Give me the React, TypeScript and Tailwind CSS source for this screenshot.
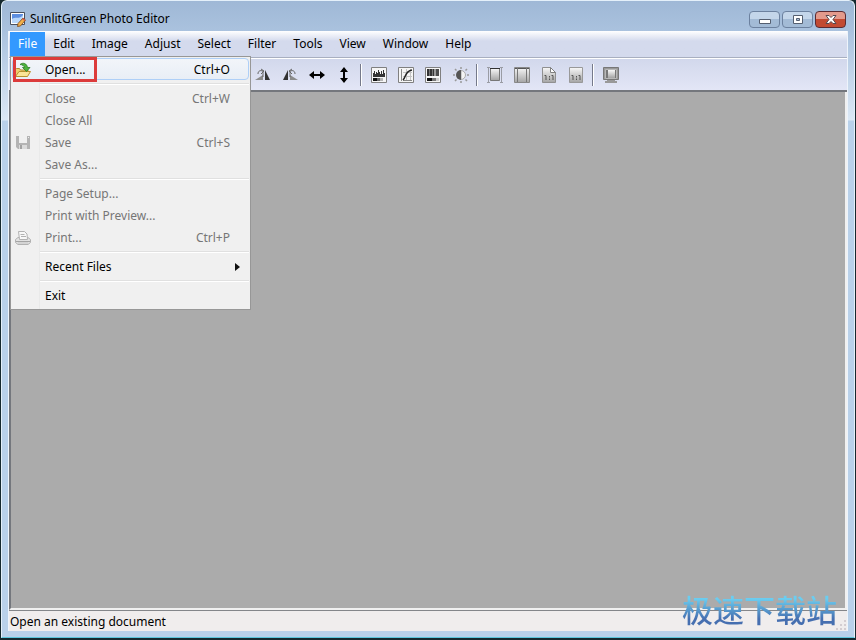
import type { ReactNode } from 'react'

type MenuEntry = { label: string; keys?: string; off?: boolean; icon?: ReactNode; sub?: boolean; active?: boolean }

const MENUS = ['Edit', 'Image', 'Adjust', 'Select', 'Filter', 'Tools', 'View', 'Window', 'Help']

const OpenIcon = () => (
  <svg width="16" height="16" viewBox="0 0 16 16">
    <path d="M.5 14V7.500l1-1h3l1 1.500H13V10" fill="#efd070" stroke="#b08a2c" />
    <path d="M.5 14.500 4 9.500h11.500l-3 5z" fill="#fae596" stroke="#b8922f" />
    <path d="M5 2.500c3-2.500 7-1 7.500 3H15l-3.500 4-4-4h2C9 4 7.500 2.500 5 2.500z" fill="#4db33c" stroke="#2c7a24" strokeWidth=".8" />
  </svg>
)

const SaveIcon = () => (
  <svg width="16" height="16" viewBox="0 0 16 16">
    <path d="M1 1h14v13H3l-2-2z" fill="#b4b4b4" />
    <path d="M4 1h8v7H4z" fill="#f0f0f0" />
    <path d="M4 10h8v4H4z" fill="#dadada" />
    <path d="M5 10h2v4H5z" fill="#a2a2a2" />
    <path d="M13 2h1v1h-1z" fill="#eee" />
  </svg>
)

const PrintIcon = () => (
  <svg width="16" height="16" viewBox="0 0 16 16" stroke="#b2b2b2" fill="#e2e2e2">
    <path d="M.5 9.500 3 7.500h10l2.500 2v3l-2.500 2H3l-2.500-2z" />
    <path d="M4.500 9.500l-1-8h6l2.500 2.500.5 5.500z" fill="#f8f8f8" />
    <path d="M5.500 4.500h4M6 6.500h5" fill="none" />
    <path d="M1 11.500h14" fill="none" stroke="#a4a4a4" />
    <path d="M3 13h10" fill="none" stroke="#c6c6c6" />
  </svg>
)

const GROUPS: MenuEntry[][] = [
  [{ label: 'Open...', keys: 'Ctrl+O', icon: <OpenIcon />, active: true }],
  [
    { label: 'Close', keys: 'Ctrl+W', off: true },
    { label: 'Close All', off: true },
    { label: 'Save', keys: 'Ctrl+S', off: true, icon: <SaveIcon /> },
    { label: 'Save As...', off: true },
  ],
  [
    { label: 'Page Setup...', off: true },
    { label: 'Print with Preview...', off: true },
    { label: 'Print...', keys: 'Ctrl+P', off: true, icon: <PrintIcon /> },
  ],
  [{ label: 'Recent Files', sub: true }],
  [{ label: 'Exit' }],
]

// 18x18 toolbar drawings, in the order they stand on the bar
const Frame = () => <path d="M1.500 1.500h15v15h-15z" fill="#f6f6f6" stroke="#808080" />

const Fade = ({ id }: { id: string }) => (
  <linearGradient id={id} x1="0" y1="0" x2="0" y2="1">
    <stop offset="0" stopColor="#f8f8f8" />
    <stop offset="1" stopColor="#a4a4a4" />
  </linearGradient>
)

const OneToOne = () => (
  <path d="M4.500 9.500H6V14M11.500 9.500H13V14M9.500 10v1.500M9.500 12.500V14" fill="none" stroke="#555" />
)

const TOOLS: { name: string; art: ReactNode }[][] = [
  [
    {
      name: 'Rotate left',
      art: (
        <>
          <path d="M11 4v10h5z" fill="#333" />
          <path d="M9 9v5H1z" fill="#8c8c8c" />
          <path d="M4 8c0-3 2-4 5-3v6M7 3l3 2-3 3" fill="none" stroke="#666" />
        </>
      ),
    },
    {
      name: 'Rotate right',
      art: (
        <>
          <path d="M7 4v10H2z" fill="#333" />
          <path d="M9 9v5h8z" fill="#8c8c8c" />
          <path d="M14 8c0-3-2-4-5-3v6M11 3L8 5l3 3" fill="none" stroke="#666" />
        </>
      ),
    },
    { name: 'Flip horizontally', art: <path d="M1 9l5-4v3h6V5l5 4-5 4v-3H6v3z" fill="#000" /> },
    { name: 'Flip vertically', art: <path d="M9 1l4 5h-3v6h3l-4 5-4-5h3V6H5z" fill="#000" /> },
  ],
  [
    {
      name: 'Levels',
      art: (
        <>
          <Frame />
          <Fade id="levels" />
          <path d="M3 11V7h1V5h1v3h1V6h1v1h1V4h1v2h1v2h1V5h1v3h1V4h1v3h1v4z" fill="#333" />
          <path d="M3 12h4v3H3z" fill="#111" />
          <path d="M7 12h3v3H7z" fill="#666" />
          <path d="M10 12h3v3h-3z" fill="#b4b4b4" />
        </>
      ),
    },
    {
      name: 'Curves',
      art: (
        <>
          <Frame />
          <path d="M9.500 3v12M13.500 3v12M6 6.500h9M6 10.500h9" stroke="#c4c4c4" />
          <path d="M4.500 3v12M6 14.500h9" stroke="#888" fill="none" />
          <path d="M6 14c3-3 2-9 9-10" stroke="#222" fill="none" strokeWidth="1.500" />
        </>
      ),
    },
    {
      name: 'Color balance',
      art: (
        <>
          <Frame />
          <path d="M3 3h7v7H3z" fill="#333" />
          <path d="M5 3h1v7H5zM8 3h1v7H8z" fill="#777" />
          <path d="M10 3h2v7h-2z" fill="#999" />
          <path d="M12 3h3v7h-3z" fill="#4c4c4c" />
          <path d="M3 12h5v3H3z" fill="#111" />
          <path d="M8 12h4v3H8z" fill="#777" />
          <path d="M12 12h3v3h-3z" fill="#ccc" />
        </>
      ),
    },
    {
      name: 'Brightness and contrast',
      art: (
        <>
          <path d="M10 4.500a4.500 4.500 0 010 9z" fill="#f4f4f4" stroke="#aaa" />
          <path d="M10 4a5 5 0 000 10z" fill="#555" />
          <path
            d="M4 3l1.500 1.500M2 9h2M4 15l1.500-1.500M10 1v2M10 15v2M16 3l-1.500 1.500M16 9h2M16 15l-1.500-1.500"
            stroke="#999"
            strokeWidth="1.500"
          />
        </>
      ),
    },
  ],
  [
    {
      name: 'Fit in window',
      art: (
        <>
          <Fade id="fit" />
          <path d="M1 1.500h3M1 16.500h3M14 1.500h3M14 16.500h3M2.500 1v16M15.500 1v16" stroke="#9a9ca4" />
          <path d="M4.500 2.500h9v12h-9z" fill="url(#fit)" stroke="#777" />
          <path d="M4 2.500h10" stroke="#333" />
        </>
      ),
    },
    {
      name: 'Fit width',
      art: (
        <>
          <Fade id="width" />
          <path d="M1.500 1.500h15v15h-15z" fill="url(#width)" stroke="#888" />
          <path d="M2 2.500h14" stroke="#555" />
          <path d="M4.500 2v14M13.500 2v14" stroke="#777" />
        </>
      ),
    },
    {
      name: 'Actual size',
      art: (
        <>
          <Fade id="actual" />
          <path d="M2.500 1.500h8l5 5v10h-13z" fill="url(#actual)" stroke="#909090" />
          <path d="M10.500 1.500v5h5z" fill="#fff" stroke="#808080" />
          <OneToOne />
        </>
      ),
    },
    {
      name: 'Actual print size',
      art: (
        <>
          <Fade id="print" />
          <path d="M2.500 1.500h13v15h-13z" fill="url(#print)" stroke="#999" />
          <OneToOne />
        </>
      ),
    },
  ],
  [
    {
      name: 'Full screen',
      art: (
        <>
          <Fade id="full" />
          <path d="M1.500 1.500h15v12h-15z" fill="#999" stroke="#777" />
          <path d="M3.500 3.500h11v9h-11z" fill="#777" stroke="#b8b8b8" />
          <path d="M6 4h7v8H6z" fill="url(#full)" />
          <path d="M5 14h8v1h2v2H3v-2h2z" fill="#999" />
        </>
      ),
    },
  ],
]

const AppIcon = () => (
  <svg width="16" height="16" viewBox="0 0 16 16" aria-hidden="true">
    <path d="M.5 1.500h14v12H.5z" fill="#fff" stroke="#4a4f5c" />
    <path d="M2 3h11v9H2z" fill="#5d8ee0" />
    <path d="M2 8c4-3 7 1 11-4v5l-4 3H2z" fill="#b9d7fa" />
    <path d="M8 12.500 13 7l2.500 2-5 6-3 .5z" fill="#f2b14a" stroke="#7c4616" strokeWidth=".8" />
    <path d="M13 7l2.500 2-1 1L12 8z" fill="#d0584c" />
  </svg>
)

function CaptionButton({ name, close, children }: { name: string; close?: boolean; children: ReactNode }) {
  return (
    <button
      aria-label={name}
      className={
        'grid h-[17px] w-[31px] place-items-center rounded-sm border ' +
        (close
          ? 'border-[#5b2a31] bg-linear-to-b from-[#e39a8c] from-50% to-[#c24a32] to-50%'
          : 'border-[#6c819f] bg-linear-to-b from-[#c4d6ea] from-50% to-[#a3bbd6] to-50%')
      }
    >
      <svg width="14" height="11" viewBox="0 0 14 11">{children}</svg>
    </button>
  )
}

function FileMenu() {
  return (
    <div
      role="menu"
      className="absolute top-full left-0 z-10 w-[241px] border border-[#979797] bg-[#f0f0f0] bg-linear-to-r from-[#f0f0f0] from-[28px] via-[#e2e3e3] via-[28px] to-[#f0f0f0] to-[29px] p-px pb-[3px] text-black"
    >
      {GROUPS.map((group, i) => (
        <div key={i}>
          {i > 0 && <div role="separator" className="mt-[3px] mb-0.5 ml-7 h-0.5 border-t border-[#e0e0e0] bg-white" />}
          {group.map((entry) => (
            <button
              key={entry.label}
              role="menuitem"
              disabled={entry.off}
              className={
                'relative flex h-[22px] w-full items-center rounded-sm border pt-0.5 pr-[18px] text-left ' +
                (entry.active ? 'border-[#aecff7] bg-linear-to-b from-[#f2f5f9] to-[#e8eef6] ' : 'border-transparent ') +
                (entry.off ? 'text-[#767676]' : '')
              }
            >
              <span className="w-8 pl-0.5">{entry.icon}</span>
              <span className="flex-1">{entry.label}</span>
              {entry.keys}
              {entry.sub && (
                <svg width="5" height="8" viewBox="0 0 5 8" className="absolute right-2">
                  <path d="M0 0l5 4-5 4z" fill="#111" />
                </svg>
              )}
              {entry.active && <span className="absolute -top-0.5 left-0 h-[25px] w-[84px] border-3 border-[#dc3b3b]" />}
            </button>
          ))}
        </div>
      ))}
    </div>
  )
}

export default function App() {
  return (
    <div className="flex min-h-screen bg-[#16292f] font-['Noto_Sans','Noto_Sans_CJK_SC',sans-serif] text-[12px] text-black">
      <div className="mx-px mb-0.5 flex flex-1 flex-col rounded-t-md border border-[#e4f0fa] border-b-[#5cc6dc] bg-[linear-gradient(#9fb8d6,#aac2de_30px,#dbe8f5_119px,#b9d1ea_120px)] px-1.5 pb-1.5">
        <header className="flex h-[30px] items-center gap-1 pt-1.5 pl-0.5">
          <AppIcon />
          <h1 className="flex-1">SunlitGreen Photo Editor</h1>
          <div className="flex gap-0.5 pr-0.5">
            <CaptionButton name="Minimize">
              <path d="M1.500 5.500h11v4h-11z" fill="#fff" stroke="#555f70" />
            </CaptionButton>
            <CaptionButton name="Maximize">
              <path d="M2.500 1.500h9v8h-9z" fill="#fff" stroke="#555f70" />
              <path d="M5.500 4.500h3v2h-3z" fill="#a9bed6" stroke="#555f70" />
            </CaptionButton>
            <CaptionButton name="Close" close>
              <path d="M2 1.500h3l2 2 2-2h3L9 5.500l3 4H9l-2-2-2 2H2l3-4z" fill="#fff" stroke="#54494f" />
            </CaptionButton>
          </div>
        </header>

        <div className="flex flex-1 flex-col border-x border-[#eef4fb] bg-[#f0eded]">
          <nav className="flex h-[27px] items-center border-b border-[#a8afc0] bg-linear-to-b from-white to-[#d4daed] to-[10px] pl-px">
            <div className="relative">
              <button className="h-6 bg-[#3399ff] px-2 text-white">File</button>
              <FileMenu />
            </div>
            <div className="flex gap-px">
              {MENUS.map((menu) => (
                <button key={menu} className="h-6 px-2">{menu}</button>
              ))}
            </div>
          </nav>

          <div className="flex h-[34px] items-center border-t border-b-2 border-t-white border-b-[#74777d] bg-linear-to-b from-[#d2d8ec] to-[#e3e6f6] pl-60">
            {TOOLS.map((group, i) => (
              <div key={i} className="flex items-center">
                {i > 0 && <div className="mx-[3px] h-[22px] w-0.5 border-r border-white bg-[#75798a]" />}
                {group.map((tool) => (
                  <button key={tool.name} aria-label={tool.name} className="grid h-6 w-[27px] place-items-center">
                    <svg width="18" height="18" viewBox="0 0 18 18">{tool.art}</svg>
                  </button>
                ))}
              </div>
            ))}
          </div>

          <main className="flex-1 border-r-2 border-b-2 border-l-2 border-r-[#f0f0f0] border-b-[#f0f0f0] border-l-[#74777d] bg-[#ababab]" />

          <footer className="relative flex h-[21px] items-center border-t border-[#84868a] pt-px pl-px">
            <span>Open an existing document</span>
            <svg width="12" height="12" viewBox="0 0 12 12" className="absolute right-0 bottom-0">
              <path d="M9 1h2v2H9zM5 5h2v2H5zM9 5h2v2H9zM1 9h2v2H1zM5 9h2v2H5zM9 9h2v2H9z" fill="#d3cdd1" />
            </svg>
            <span className="absolute right-2.5 bottom-0.5 bg-linear-to-b from-[#6bcdf0] from-25% to-[#466fb0] to-75% bg-clip-text font-['Noto_Sans_CJK_SC',sans-serif] text-[31px] leading-10 font-medium whitespace-nowrap text-transparent">
              极速下载站
            </span>
          </footer>
        </div>
      </div>
    </div>
  )
}
